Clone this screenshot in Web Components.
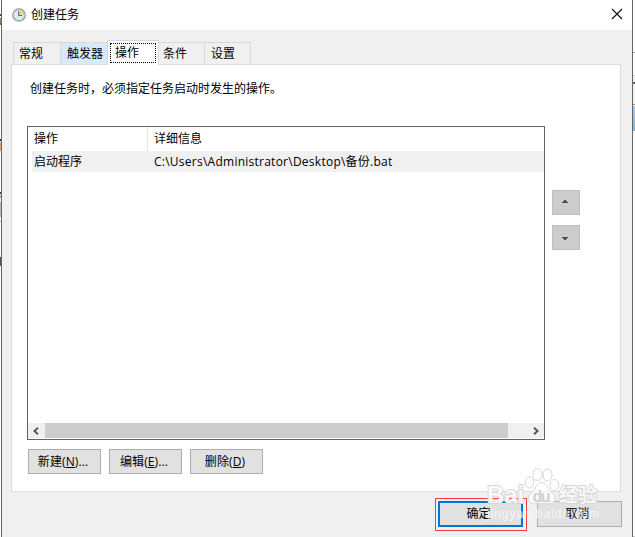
<!DOCTYPE html>
<html lang="zh-CN">
<head>
<meta charset="utf-8">
<title>创建任务</title>
<style>
html,body{margin:0;height:537px;overflow:hidden;background:#fff}
body{font:12px/16px "Open Sans","Noto Sans CJK SC",sans-serif;color:#000}
</style>
</head>
<body>
<task-desktop>
  <task-dialog>
    <span slot="title">创建任务</span>
    <tab-strip>
      <tab-item style="width:48px">常规</tab-item>
      <tab-item hot style="width:47px">触发器</tab-item>
      <tab-item selected style="width:52px">操作</tab-item>
      <tab-item style="width:46px">条件</tab-item>
      <tab-item style="width:46px">设置</tab-item>
    </tab-strip>
    <tab-panel>
      <span slot="hint">创建任务时，必须指定任务启动时发生的操作。</span>
      <action-list slot="list"></action-list>
      <order-button slot="order" dir="up"></order-button>
      <order-button slot="order" dir="down"></order-button>
      <push-button slot="tools">新建(<u>N</u>)...</push-button>
      <push-button slot="tools">编辑(<u>E</u>)...</push-button>
      <push-button slot="tools">删除(<u>D</u>)</push-button>
    </tab-panel>
    <red-frame slot="footer"><push-button primary>确定</push-button></red-frame>
    <push-button slot="footer" wide>取消</push-button>
  </task-dialog>
</task-desktop>
<script>
function define(name, markup) {
  customElements.define(name, class extends HTMLElement {
    constructor() {
      super();
      this.attachShadow({mode: 'open'}).innerHTML = '<style>*{box-sizing:border-box}:host{box-sizing:border-box}</style>' + markup;
    }
  });
}

define('task-desktop', `
<style>
:host{display:grid;grid-template-columns:1px 632px 2px;width:635px;height:537px;position:relative;overflow:hidden}
.l{background:linear-gradient(#fff 14px,#543 14px 16px,#fff 16px 18px,#a67c4c 18px 23px,#468 23px 25px,#fff 25px 139px,#333 139px 141px,#cde 141px 143px,#d9a060 143px 151px,#fff 151px 192px,#444 192px 194px,#fff 194px 195px,#e0a868 195px 198px,#fff 198px 202px,#a9bdd0 202px 217px,#fff 217px 221px,#bbb 221px 222px,#fff 222px 257px,#456 257px 266px,#fff 266px)}
.r{background:linear-gradient(#fff 52px,#999 52px 53px,#fff 53px 75px,#ccc 75px 76px,#eee 76px 82px,#666 82px 84px,#fff 84px 85px,#f0f0f0 85px 104px,#888 104px 105px,#fff 105px 106px,#a9c9e6 106px,#86afd5 131px,#fff 131px 536px,#ccc 536px)}
bd-watermark{position:absolute;left:484px;top:464px}
</style>
<div class="l"></div><slot></slot><div class="r"></div><bd-watermark></bd-watermark>`);

define('task-dialog', `
<style>
:host{display:flex;flex-direction:column;height:537px;background:#f0f0f0;border:solid #666;border-width:0 1px}
header{height:30px;flex:none;background:#fff;display:flex;align-items:center;padding:0 9px 0 10px}
header slot{display:block}
.t{margin-left:5px;flex:1}
.body{padding:10px 11px 0 9px;flex:none}
footer{display:flex;justify-content:flex-end;align-items:flex-start;gap:10px;padding:6px 10px 0 0}
footer ::slotted([wide]){margin-top:3px}
</style>
<header>
<svg width="14" height="14" viewBox="0 0 14 14"><circle cx="7" cy="7" r="6.2" fill="#dcecf2" stroke="#8e9496" stroke-width="1.2"/><path d="M7 2A5 5 0 0 1 12 7H7z" fill="#f3cf87"/><circle cx="7" cy="7" r="5" fill="none" stroke="#b9cad0" stroke-width=".6"/><path d="M6.6 3v4.5H10" fill="none" stroke="#5b6a72" stroke-width="1"/></svg>
<div class="t"><slot name="title"></slot></div>
<svg width="12" height="12" viewBox="0 0 12 12" style="margin-top:-2px"><path d="M1 1l10 10M11 1L1 11" stroke="#111" stroke-width="1.15" fill="none"/></svg>
</header>
<div class="body"><slot></slot></div>
<footer><slot name="footer"></slot></footer>`);

define('tab-strip', `
<style>:host{display:flex;align-items:flex-end;height:24px;padding-left:2px}</style><slot></slot>`);

define('tab-item', `
<style>
:host{display:block;height:22px;flex:none;border:1px solid #d9d9d9;border-bottom:0;border-left-width:0;background:#f0f0f0;padding:3px 0 0 6px;white-space:nowrap}
:host(:first-child){border-left-width:1px;padding-left:5px}
:host([hot]){background:#d8eaf9;padding-left:6px}
:host([selected]){height:25px;margin:0 0 -1px -1px;border-left-width:1px;background:#fff;z-index:1;position:relative;padding:2px}
:host([selected]) .f{display:block;height:20px;width:46px;border:1px dotted #000;padding:0 0 0 4px;line-height:18px}
:host(:nth-child(4)){padding-left:4px}
</style><span class="f"><slot></slot></span>`);

define('tab-panel', `
<style>
:host{display:flex;flex-direction:column;width:610px;height:428px;background:#fff;border:1px solid #dcdcdc;padding:16px 0 0 15px}
.h{height:45px;padding-left:3px;white-space:nowrap}
.m{display:flex;gap:7px;height:314px}
.o{display:flex;flex-direction:column;gap:10px;padding-top:64px}
.b{display:flex;gap:8px;padding:9px 0 0 1px}
</style>
<div class="h"><slot name="hint"></slot></div>
<div class="m"><slot name="list"></slot><div class="o"><slot name="order"></slot></div></div>
<div class="b"><slot name="tools"></slot></div>`);

define('action-list', `
<style>
:host{display:flex;flex-direction:column;width:518px;height:314px;border:1px solid #646464;background:#fff}
.row{display:grid;grid-template-columns:115px 1fr;height:21px;margin-left:4px;background:#f0f0f0;line-height:22px}
.head{height:24px;background:#fff;line-height:24px}
.row>span{padding-left:2px}
.row>span+span{padding-left:7px}
.head>span+span{border-left:1px solid #e5e5e5;padding-left:6px}
.path{letter-spacing:.25px}
.s{flex:1}
.bar{display:grid;grid-template-columns:17px 463px 1fr;height:15px;background:#f0f0f0;margin-bottom:1px;align-items:center}
.thumb{background:#cdcdcd;height:15px}
svg{display:block;margin-left:5px}
svg.e{margin-left:25px}
</style>
<div class="row head"><span>操作</span><span>详细信息</span></div>
<div class="row"><span>启动程序</span><span class="path">C:\\Users\\Administrator\\Desktop\\备份.bat</span></div>
<div class="s"></div>
<div class="bar"><svg width="6" height="8" viewBox="0 0 6 8"><path d="M5 .7L1.4 4 5 7.3" fill="none" stroke="#555" stroke-width="1.9"/></svg><div class="thumb"></div><svg class="e" width="6" height="8" viewBox="0 0 6 8"><path d="M1 .7L4.6 4 1 7.3" fill="none" stroke="#555" stroke-width="1.9"/></svg></div>`);

define('order-button', `
<style>
:host{display:block;width:28px;height:25px;background:#ccc;border:1px solid #bfbfbf}
svg{display:block;margin:9px 0 0 9px}
:host([dir=down]) svg{transform:scaleY(-1);margin-top:11px}
</style><svg width="6" height="3" viewBox="0 0 6 3" shape-rendering="crispEdges"><path d="M2 0h2v1h1v1h1v1H0V2h1V1h1z" fill="#505050"/></svg>`);

define('push-button', `
<style>
:host{display:block;width:73px;height:25px;background:#e1e1e1;border:1px solid #adadad;text-align:center;line-height:23px;white-space:nowrap;padding-right:3px;letter-spacing:.1px}
:host([wide]),:host([primary]){width:85px;height:26px;line-height:23px}
:host([wide]){padding-right:4px}
:host([primary]){border:2px solid #0078d7;line-height:21px;padding-right:4px}
::slotted(u){text-underline-offset:1px;text-decoration-thickness:1px}
</style><slot></slot>`);

define('red-frame', `
<style>:host{display:block;width:92px;height:33px;border:1px solid #f33b3b;padding:2px}</style><slot></slot>`);

define('bd-watermark', `
<style>
:host{display:block;width:120px;height:60px}
text{font-family:"Liberation Sans","Noto Sans CJK SC",sans-serif}
</style>
<svg width="120" height="60" viewBox="0 0 120 60">
<g fill="#fff" fill-opacity=".75" stroke="#d6d6d6" stroke-width="1">
<ellipse cx="45.500" cy="18.500" rx="4.300" ry="5.500"/><ellipse cx="53.500" cy="10.500" rx="4.600" ry="6"/><ellipse cx="63.500" cy="11" rx="4.600" ry="6"/><ellipse cx="70.500" cy="21" rx="4.400" ry="5.500"/>
<path d="M57.500 18.500c5 0 6 5 9 8.500 3 3 5 4.500 4.500 8.500-.6 4-4 4.500-7 4.300-4-.2-8-.2-12 0-4 .2-7-1-7.400-5-.3-4 2.400-5.500 5-8.300 2.500-3 3.400-8 7.900-8z"/>
</g>
<g fill="#fff" fill-opacity=".85" stroke="#d6d6d6" stroke-width="1.800" paint-order="stroke" font-weight="bold">
<text x="3" y="38.500" font-size="24" textLength="37" lengthAdjust="spacingAndGlyphs">Bai</text>
<text x="75" y="38" font-size="19" textLength="38">经验</text>
</g>
<text x="48.500" y="38" font-size="16" font-weight="bold" fill="#d0d0d0" textLength="18">du</text>
<text x="3" y="54" font-size="12" fill="#fff" fill-opacity=".75" textLength="112">jingyan.baidu.com</text>
</svg>`);
</script>
</body>
</html>
